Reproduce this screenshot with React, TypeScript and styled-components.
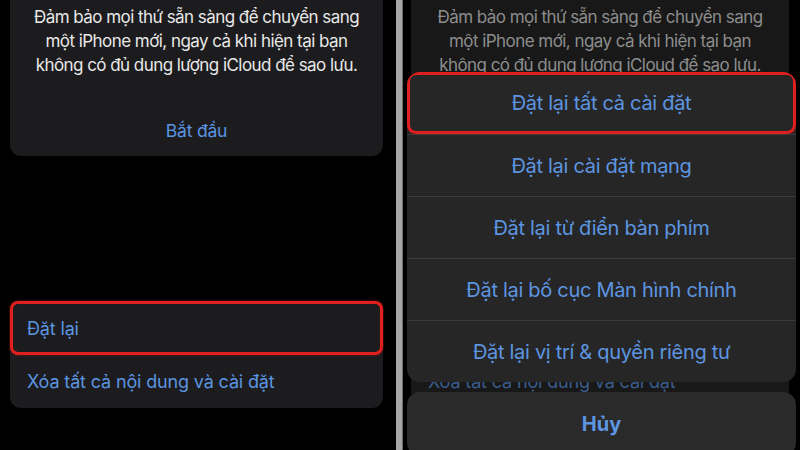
import styled, { createGlobalStyle } from "styled-components";

const GlobalStyle = createGlobalStyle`
  html, body {
    margin: 0;
    padding: 0;
    background: #000;
  }
  body {
    font-family: Inter, "Noto Sans", sans-serif;
    -webkit-font-smoothing: antialiased;
  }
`;

const Page = styled.div`
  display: flex;
  width: 800px;
  height: 450px;
  overflow: hidden;
  background: #000;
`;

const Phone = styled.div<{ $width: number }>`
  position: relative;
  width: ${(p) => p.$width}px;
  height: 450px;
  overflow: hidden;
  background: #000;
`;

const Divider = styled.div`
  width: 6px;
  flex-shrink: 0;
  background: #a6a6a6;
  border-right: 1px solid #6c6c6c;
`;

const Screen = styled.div<{ $left: number; $right: number }>`
  display: flex;
  flex-direction: column;
  height: 100%;
  padding: 0 ${(p) => p.$right}px 0 ${(p) => p.$left}px;
`;

const InfoCard = styled.div<{ $dim?: boolean }>`
  display: flex;
  flex-direction: column;
  height: 156px;
  flex-shrink: 0;
  box-sizing: border-box;
  padding-top: 5px;
  border-radius: 0 0 11px 11px;
  background: ${(p) => (p.$dim ? "#181818" : "#1c1c1e")};
`;

const Description = styled.p<{ $dim?: boolean }>`
  margin: 0;
  padding: 0 12px;
  text-align: center;
  white-space: nowrap;
  font-size: 17px;
  line-height: 24px;
  letter-spacing: -0.55px;
  color: ${(p) => (p.$dim ? "#8d8d8d" : "#e8e8e8")};
`;

const StartButton = styled.div<{ $dim?: boolean }>`
  display: flex;
  align-items: center;
  justify-content: center;
  height: 52px;
  margin-top: auto;
  font-size: 17.5px;
  letter-spacing: -0.2px;
  color: ${(p) => (p.$dim ? "#3a5d8e" : "#5b94e0")};
`;

const ResetCard = styled.div<{ $dim?: boolean }>`
  display: flex;
  flex-direction: column;
  flex-shrink: 0;
  margin-top: 145px;
  border-radius: 11px;
  background: ${(p) => (p.$dim ? "#181818" : "#1c1c1e")};
`;

const ResetRow = styled.div<{ $dim?: boolean; $highlight?: boolean }>`
  display: flex;
  align-items: center;
  height: 54px;
  box-sizing: border-box;
  padding-left: 17px;
  font-size: 18px;
  letter-spacing: -0.15px;
  color: ${(p) => (p.$dim ? "#3a5d8e" : "#5b94e0")};
  border-radius: 8px;
  box-shadow: ${(p) => (p.$highlight ? "inset 0 0 0 3px #e0201f, 0 0 2px #b0181a" : "none")};
  & + & {
    height: 53px;
  }
`;

const Overlay = styled.div`
  position: absolute;
  inset: 0;
  display: flex;
  flex-direction: column;
  gap: 10px;
  padding: 72px 4px 0 4px;
`;

const Sheet = styled.div`
  display: flex;
  flex-direction: column;
  flex-shrink: 0;
  border-radius: 13px;
  overflow: hidden;
  background: #262627;
`;

const SheetRow = styled.div<{ $highlight?: boolean }>`
  display: flex;
  align-items: center;
  justify-content: center;
  height: 62px;
  flex-shrink: 0;
  box-sizing: border-box;
  font-size: 20px;
  letter-spacing: -0.3px;
  color: #5d95e0;
  border-radius: ${(p) => (p.$highlight ? "9px" : "0")};
  box-shadow: ${(p) => (p.$highlight ? "inset 0 0 0 3px #e0201f, 0 0 2px #b0181a" : "none")};
  & + & {
    border-top: 1px solid #3b3b3d;
  }
`;

const CancelButton = styled.div`
  display: flex;
  align-items: center;
  justify-content: center;
  height: 64px;
  flex-shrink: 0;
  border-radius: 13px;
  background: #2a2a2b;
  font-size: 20px;
  font-weight: 700;
  color: #5d95e0;
`;

const SettingsScreen: React.FC<{ dim?: boolean; left: number; right: number }> = ({
  dim,
  left,
  right,
}) => (
  <Screen $left={left} $right={right}>
    <InfoCard $dim={dim}>
      <Description $dim={dim}>
        Đảm bảo mọi thứ sẵn sàng để chuyển sang
        <br />
        một iPhone mới, ngay cả khi hiện tại bạn
        <br />
        không có đủ dung lượng iCloud để sao lưu.
      </Description>
      <StartButton $dim={dim}>Bắt đầu</StartButton>
    </InfoCard>
    <ResetCard $dim={dim}>
      <ResetRow $dim={dim} $highlight={!dim}>
        Đặt lại
      </ResetRow>
      <ResetRow $dim={dim}>Xóa tất cả nội dung và cài đặt</ResetRow>
    </ResetCard>
  </Screen>
);

const resetOptions = [
  "Đặt lại tất cả cài đặt",
  "Đặt lại cài đặt mạng",
  "Đặt lại từ điển bàn phím",
  "Đặt lại bố cục Màn hình chính",
  "Đặt lại vị trí & quyền riêng tư",
];

export default function App() {
  return (
    <>
      <GlobalStyle />
      <Page>
        <Phone $width={396}>
          <SettingsScreen left={10} right={13} />
        </Phone>
        <Divider />
        <Phone $width={397}>
          <SettingsScreen dim left={8} right={11} />
          <Overlay>
            <Sheet>
              {resetOptions.map((label, i) => (
                <SheetRow key={label} $highlight={i === 0}>
                  {label}
                </SheetRow>
              ))}
            </Sheet>
            <CancelButton>Hủy</CancelButton>
          </Overlay>
        </Phone>
      </Page>
    </>
  );
}
